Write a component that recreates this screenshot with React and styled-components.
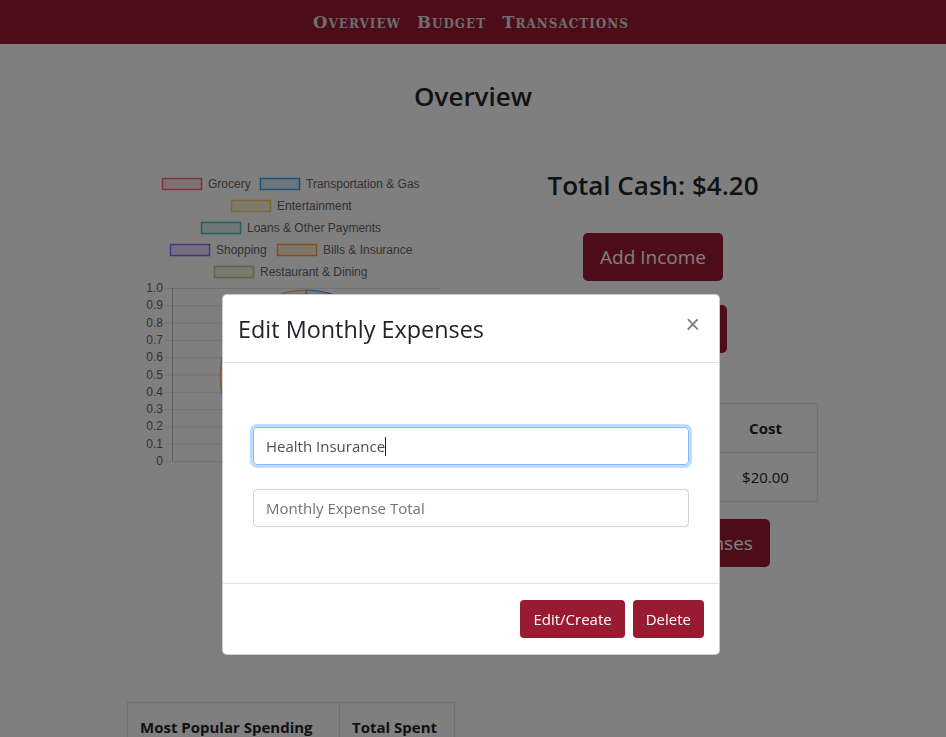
import React from "react";
import styled, { createGlobalStyle } from "styled-components";

const GlobalStyle = createGlobalStyle`
  html, body {
    margin: 0;
    padding: 0;
    background: #fff;
    font-family: "Open Sans", "Noto Sans", sans-serif;
    color: #212529;
  }
  * { box-sizing: border-box; }
`;

const brand = "#991b31";

const NavBar = styled.nav`
  height: 44px;
  background: ${brand};
  display: flex;
  align-items: center;
  justify-content: center;
  padding-right: 4px;
`;

const NavLink = styled.a`
  font-family: "DejaVu Serif", serif;
  font-variant: small-caps;
  font-weight: 700;
  font-size: 16.5px;
  letter-spacing: 1px;
  color: #dcdcdc;
  text-decoration: none;
  padding: 0 8px;
`;

const Container = styled.main`
  width: 720px;
  margin: 0 auto;
  padding: 0 15px;
`;

const PageTitle = styled.h3`
  margin: 37px 0 55px;
  font-size: 26px;
  font-weight: 600;
  line-height: 1.2;
  text-align: center;
`;

const Row = styled.div`
  display: flex;
  gap: 30px;
  align-items: flex-start;
`;

const Col = styled.div`
  flex: 1;
  min-width: 0;
  display: flex;
  flex-direction: column;
  align-items: ${(p) => (p.$center ? "center" : "stretch")};
`;

const CashTitle = styled.h3`
  margin: 2px 0 30px;
  font-size: 26px;
  font-weight: 600;
  line-height: 1.3;
`;

const BigButton = styled.button`
  background: ${brand};
  color: #fff;
  border: none;
  border-radius: 5px;
  font-family: inherit;
  font-size: 19px;
  height: 48px;
  padding: 0 17px;
  margin-bottom: ${(p) => p.$mb || 0}px;
`;

const Table = styled.table`
  width: ${(p) => p.$width || "100%"};
  border-collapse: collapse;
  font-size: 15px;
  margin-bottom: ${(p) => p.$mb || 0}px;
  th, td {
    border: 1px solid #dee2e6;
    padding: 12px;
    text-align: ${(p) => p.$align || "left"};
  }
  th {
    font-weight: 700;
    height: 49px;
  }
  td {
    height: 49px;
  }
`;

const BottomSection = styled.div`
  margin-top: 135px;
  margin-left: -1px;
`;

const Backdrop = styled.div`
  position: fixed;
  inset: 0;
  background: rgba(0, 0, 0, 0.5);
`;

const ModalWrap = styled.div`
  position: fixed;
  inset: 0;
  display: flex;
  justify-content: center;
  align-items: flex-start;
  padding-top: 294px;
  padding-right: 4px;
`;

const Modal = styled.div`
  width: 498px;
  background: #fff;
  border: 1px solid rgba(0, 0, 0, 0.2);
  border-radius: 5px;
`;

const ModalHeader = styled.div`
  display: flex;
  justify-content: space-between;
  align-items: flex-start;
  padding: 16px 15px 15px;
  border-bottom: 1px solid #dee2e6;
`;

const ModalTitle = styled.h4`
  margin: 0;
  font-size: 23.4px;
  font-weight: 400;
  line-height: 36px;
`;

const Close = styled.span`
  font-family: "Liberation Sans", sans-serif;
  font-size: 25px;
  font-weight: 400;
  line-height: 1;
  color: #000;
  opacity: 0.5;
  margin-top: 1px;
  margin-right: 4px;
`;

const ModalBody = styled.div`
  padding: 64px 30px 56px;
  display: flex;
  flex-direction: column;
  gap: 24px;
`;

const Input = styled.div`
  height: 38px;
  display: flex;
  align-items: center;
  padding: 0 12px;
  font-size: 15px;
  border-radius: 4px;
  border: 1px solid ${(p) => (p.$focus ? "#80bdff" : "#ced4da")};
  box-shadow: ${(p) => (p.$focus ? "0 0 0 3px rgba(0,123,255,.25)" : "none")};
  color: ${(p) => (p.$placeholder ? "#6c757d" : "#495057")};
`;

const Caret = styled.span`
  display: inline-block;
  width: 1px;
  height: 19px;
  background: #222;
`;

const ModalFooter = styled.div`
  display: flex;
  justify-content: flex-end;
  gap: 8px;
  padding: 16px 15px 16px;
  border-top: 1px solid #dee2e6;
`;

const Button = styled.button`
  background: ${brand};
  color: #fff;
  border: none;
  border-radius: 4px;
  font-family: inherit;
  font-size: 15px;
  height: 38px;
  padding: 0 13px;
`;

const legend = [
  { label: "Grocery", x: 34, y: 13, c: "255,99,132" },
  { label: "Transportation & Gas", x: 132, y: 13, c: "54,162,235" },
  { label: "Entertainment", x: 103, y: 35, c: "255,206,86" },
  { label: "Loans & Other Payments", x: 73, y: 57, c: "75,192,192" },
  { label: "Shopping", x: 42, y: 79, c: "153,102,255" },
  { label: "Bills & Insurance", x: 149, y: 79, c: "255,159,64" },
  { label: "Restaurant & Dining", x: 86, y: 101, c: "170,214,120" },
];

const slices = [
  { from: 0, to: 15, c: "54,162,235" },
  { from: 15, to: 60, c: "153,102,255" },
  { from: 60, to: 120, c: "255,99,132" },
  { from: 120, to: 160, c: "255,206,86" },
  { from: 160, to: 200, c: "75,192,192" },
  { from: 200, to: 360, c: "255,159,64" },
];

function arc(cx, cy, r, a0, a1) {
  const p = (a) => {
    const rad = ((a - 90) * Math.PI) / 180;
    return [cx + r * Math.cos(rad), cy + r * Math.sin(rad)];
  };
  const [x0, y0] = p(a0);
  const [x1, y1] = p(a1);
  const large = a1 - a0 > 180 ? 1 : 0;
  return `M${cx},${cy} L${x0},${y0} A${r},${r} 0 ${large} 1 ${x1},${y1} Z`;
}

const ChartSvg = styled.svg`
  display: block;
  margin-top: 4px;
`;

function SpendingChart() {
  const ticks = [];
  for (let i = 0; i <= 10; i++) ticks.push(i);
  return (
    <ChartSvg width="330" height="300">
      {legend.map((l) => (
        <g key={l.label}>
          <rect x={l.x + 0.5} y={l.y - 5.5} width="39" height="11" fill={`rgba(${l.c},0.2)`} stroke={`rgb(${l.c})`} strokeWidth="1.5" />
          <text x={l.x + 46} y={l.y + 4} fontFamily="Liberation Sans, Arial, sans-serif" fontSize="12" fill="#666">
            {l.label}
          </text>
        </g>
      ))}
      {ticks.map((i) => {
        const y = 290 - i * 17.3;
        return (
          <g key={i}>
            <line x1="37" x2="312" y1={y + 0.5} y2={y + 0.5} stroke="rgba(0,0,0,0.1)" />
            <text x="35" y={y + 4} textAnchor="end" fontFamily="Liberation Sans, Arial, sans-serif" fontSize="12" fill="#666">
              {i === 10 ? "1.0" : i === 0 ? "0" : `0.${i}`}
            </text>
          </g>
        );
      })}
      <line x1="44.5" x2="44.5" y1="117" y2="290" stroke="rgba(0,0,0,0.25)" />
      {slices.map((s) => (
        <path key={s.from} d={arc(178, 205, 86, s.from, s.to)} fill={`rgba(${s.c},0.2)`} stroke={`rgb(${s.c})`} strokeWidth="1" />
      ))}
    </ChartSvg>
  );
}

export default function App() {
  return (
    <>
      <GlobalStyle />
      <NavBar>
        <NavLink href="#">Overview</NavLink>
        <NavLink href="#">Budget</NavLink>
        <NavLink href="#">Transactions</NavLink>
      </NavBar>
      <Container>
        <PageTitle>Overview</PageTitle>
        <Row>
          <Col>
            <SpendingChart />
          </Col>
          <Col $center>
            <CashTitle>Total Cash: $4.20</CashTitle>
            <BigButton $mb={24}>Add Income</BigButton>
            <BigButton $mb={50}>Add Expense</BigButton>
            <Table $mb={17} $align="center">
              <thead>
                <tr>
                  <th>Monthly Expense</th>
                  <th style={{ width: 104 }}>Cost</th>
                </tr>
              </thead>
              <tbody>
                <tr>
                  <td>Health Insurance</td>
                  <td>$20.00</td>
                </tr>
              </tbody>
            </Table>
            <BigButton>Edit Monthly Expenses</BigButton>
          </Col>
        </Row>
        <BottomSection>
          <Table $width="328px">
            <thead>
              <tr>
                <th style={{ width: 212 }}>Most Popular Spending</th>
                <th>Total Spent</th>
              </tr>
            </thead>
            <tbody>
              <tr>
                <td>Bills &amp; Insurance</td>
                <td>$20.00</td>
              </tr>
            </tbody>
          </Table>
        </BottomSection>
      </Container>
      <Backdrop />
      <ModalWrap>
        <Modal>
          <ModalHeader>
            <ModalTitle>Edit Monthly Expenses</ModalTitle>
            <Close>×</Close>
          </ModalHeader>
          <ModalBody>
            <Input $focus>
              Health Insurance
              <Caret />
            </Input>
            <Input $placeholder>Monthly Expense Total</Input>
          </ModalBody>
          <ModalFooter>
            <Button>Edit/Create</Button>
            <Button>Delete</Button>
          </ModalFooter>
        </Modal>
      </ModalWrap>
    </>
  );
}
